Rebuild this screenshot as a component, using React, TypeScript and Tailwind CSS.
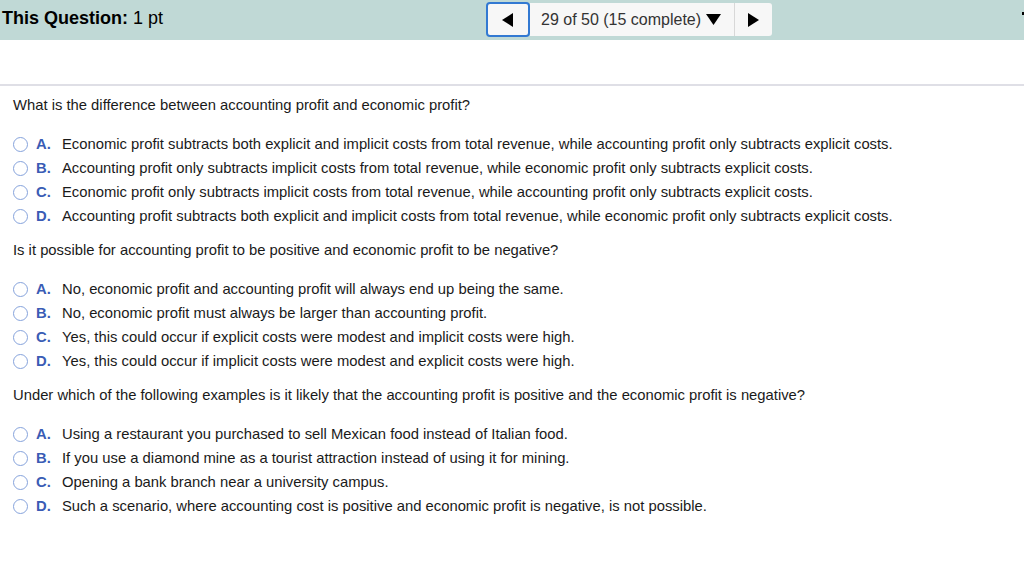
import React from "react";

const questions = [
  {
    q: "What is the difference between accounting profit and economic profit?",
    opts: [
      "Economic profit subtracts both explicit and implicit costs from total revenue, while accounting profit only subtracts explicit costs.",
      "Accounting profit only subtracts implicit costs from total revenue, while economic profit only subtracts explicit costs.",
      "Economic profit only subtracts implicit costs from total revenue, while accounting profit only subtracts explicit costs.",
      "Accounting profit subtracts both explicit and implicit costs from total revenue, while economic profit only subtracts explicit costs.",
    ],
  },
  {
    q: "Is it possible for accounting profit to be positive and economic profit to be negative?",
    opts: [
      "No, economic profit and accounting profit will always end up being the same.",
      "No, economic profit must always be larger than accounting profit.",
      "Yes, this could occur if explicit costs were modest and implicit costs were high.",
      "Yes, this could occur if implicit costs were modest and explicit costs were high.",
    ],
  },
  {
    q: "Under which of the following examples is it likely that the accounting profit is positive and the economic profit is negative?",
    opts: [
      "Using a restaurant you purchased to sell Mexican food instead of Italian food.",
      "If you use a diamond mine as a tourist attraction instead of using it for mining.",
      "Opening a bank branch near a university campus.",
      "Such a scenario, where accounting cost is positive and economic profit is negative, is not possible.",
    ],
  },
];

const letters = ["A.", "B.", "C.", "D."];

export default function App() {
  return (
    <div
      className="w-[1024px] h-[576px] bg-white text-[#1a1a1a] relative overflow-hidden"
      style={{ fontFamily: '"Liberation Sans", Arial, sans-serif' }}
    >
      <div className="h-[40px] bg-[#c0d9d6] flex items-start relative">
        <div className="pl-[2px] pt-[8px] text-[18px] leading-[21px] text-black">
          <span className="font-bold">This Question:</span> 1 pt
        </div>
        <div className="absolute left-[486px] top-[2px] flex h-[35px]">
          <div className="w-[44px] h-[35px] rounded-[4px] border-2 border-[#3279d2] bg-[#f7f7f7] flex items-center justify-center">
            <svg width="12" height="14" viewBox="0 0 12 14">
              <polygon points="11,0 11,14 0,7" fill="#000" />
            </svg>
          </div>
          <div className="w-[205px] h-[33px] mt-[1px] bg-[#f7f7f7] border-r border-[#d8d8d8] flex items-center pl-[11px] text-[16px] text-[#333]">
            29 of 50 (15 complete)
            <svg className="ml-[5px]" width="15" height="11" viewBox="0 0 15 11">
              <polygon points="0,0 15,0 7.5,11" fill="#000" />
            </svg>
          </div>
          <div className="w-[37px] h-[33px] mt-[1px] bg-[#f7f7f7] rounded-r-[3px] flex items-center justify-center">
            <svg width="11" height="14" viewBox="0 0 11 14">
              <polygon points="0,0 0,14 11,7" fill="#000" />
            </svg>
          </div>
        </div>
        <div className="absolute right-0 top-[12px] w-[2px] h-[3px] bg-black" />
      </div>
      <div className="h-[46px] border-b-2 border-[#dfdfe6]" />
      <div className="pl-[13px] pt-[10px]">
        {questions.map((qq, qi) => (
          <div key={qi} className="mb-[13px]">
            <div className="text-[14.8px] leading-[18px] h-[18px]">{qq.q}</div>
            <div className="mt-[18px]">
              {qq.opts.map((o, oi) => (
                <div key={oi} className="flex items-center h-[24px] text-[14.8px]">
                  <span className="w-[15px] h-[15px] rounded-full border-[1.5px] border-[#86a3dc] bg-white inline-block" />
                  <span className="ml-[8px] w-[26px] font-bold text-[#3a5cb5]">{letters[oi]}</span>
                  <span>{o}</span>
                </div>
              ))}
            </div>
          </div>
        ))}
      </div>
    </div>
  );
}
